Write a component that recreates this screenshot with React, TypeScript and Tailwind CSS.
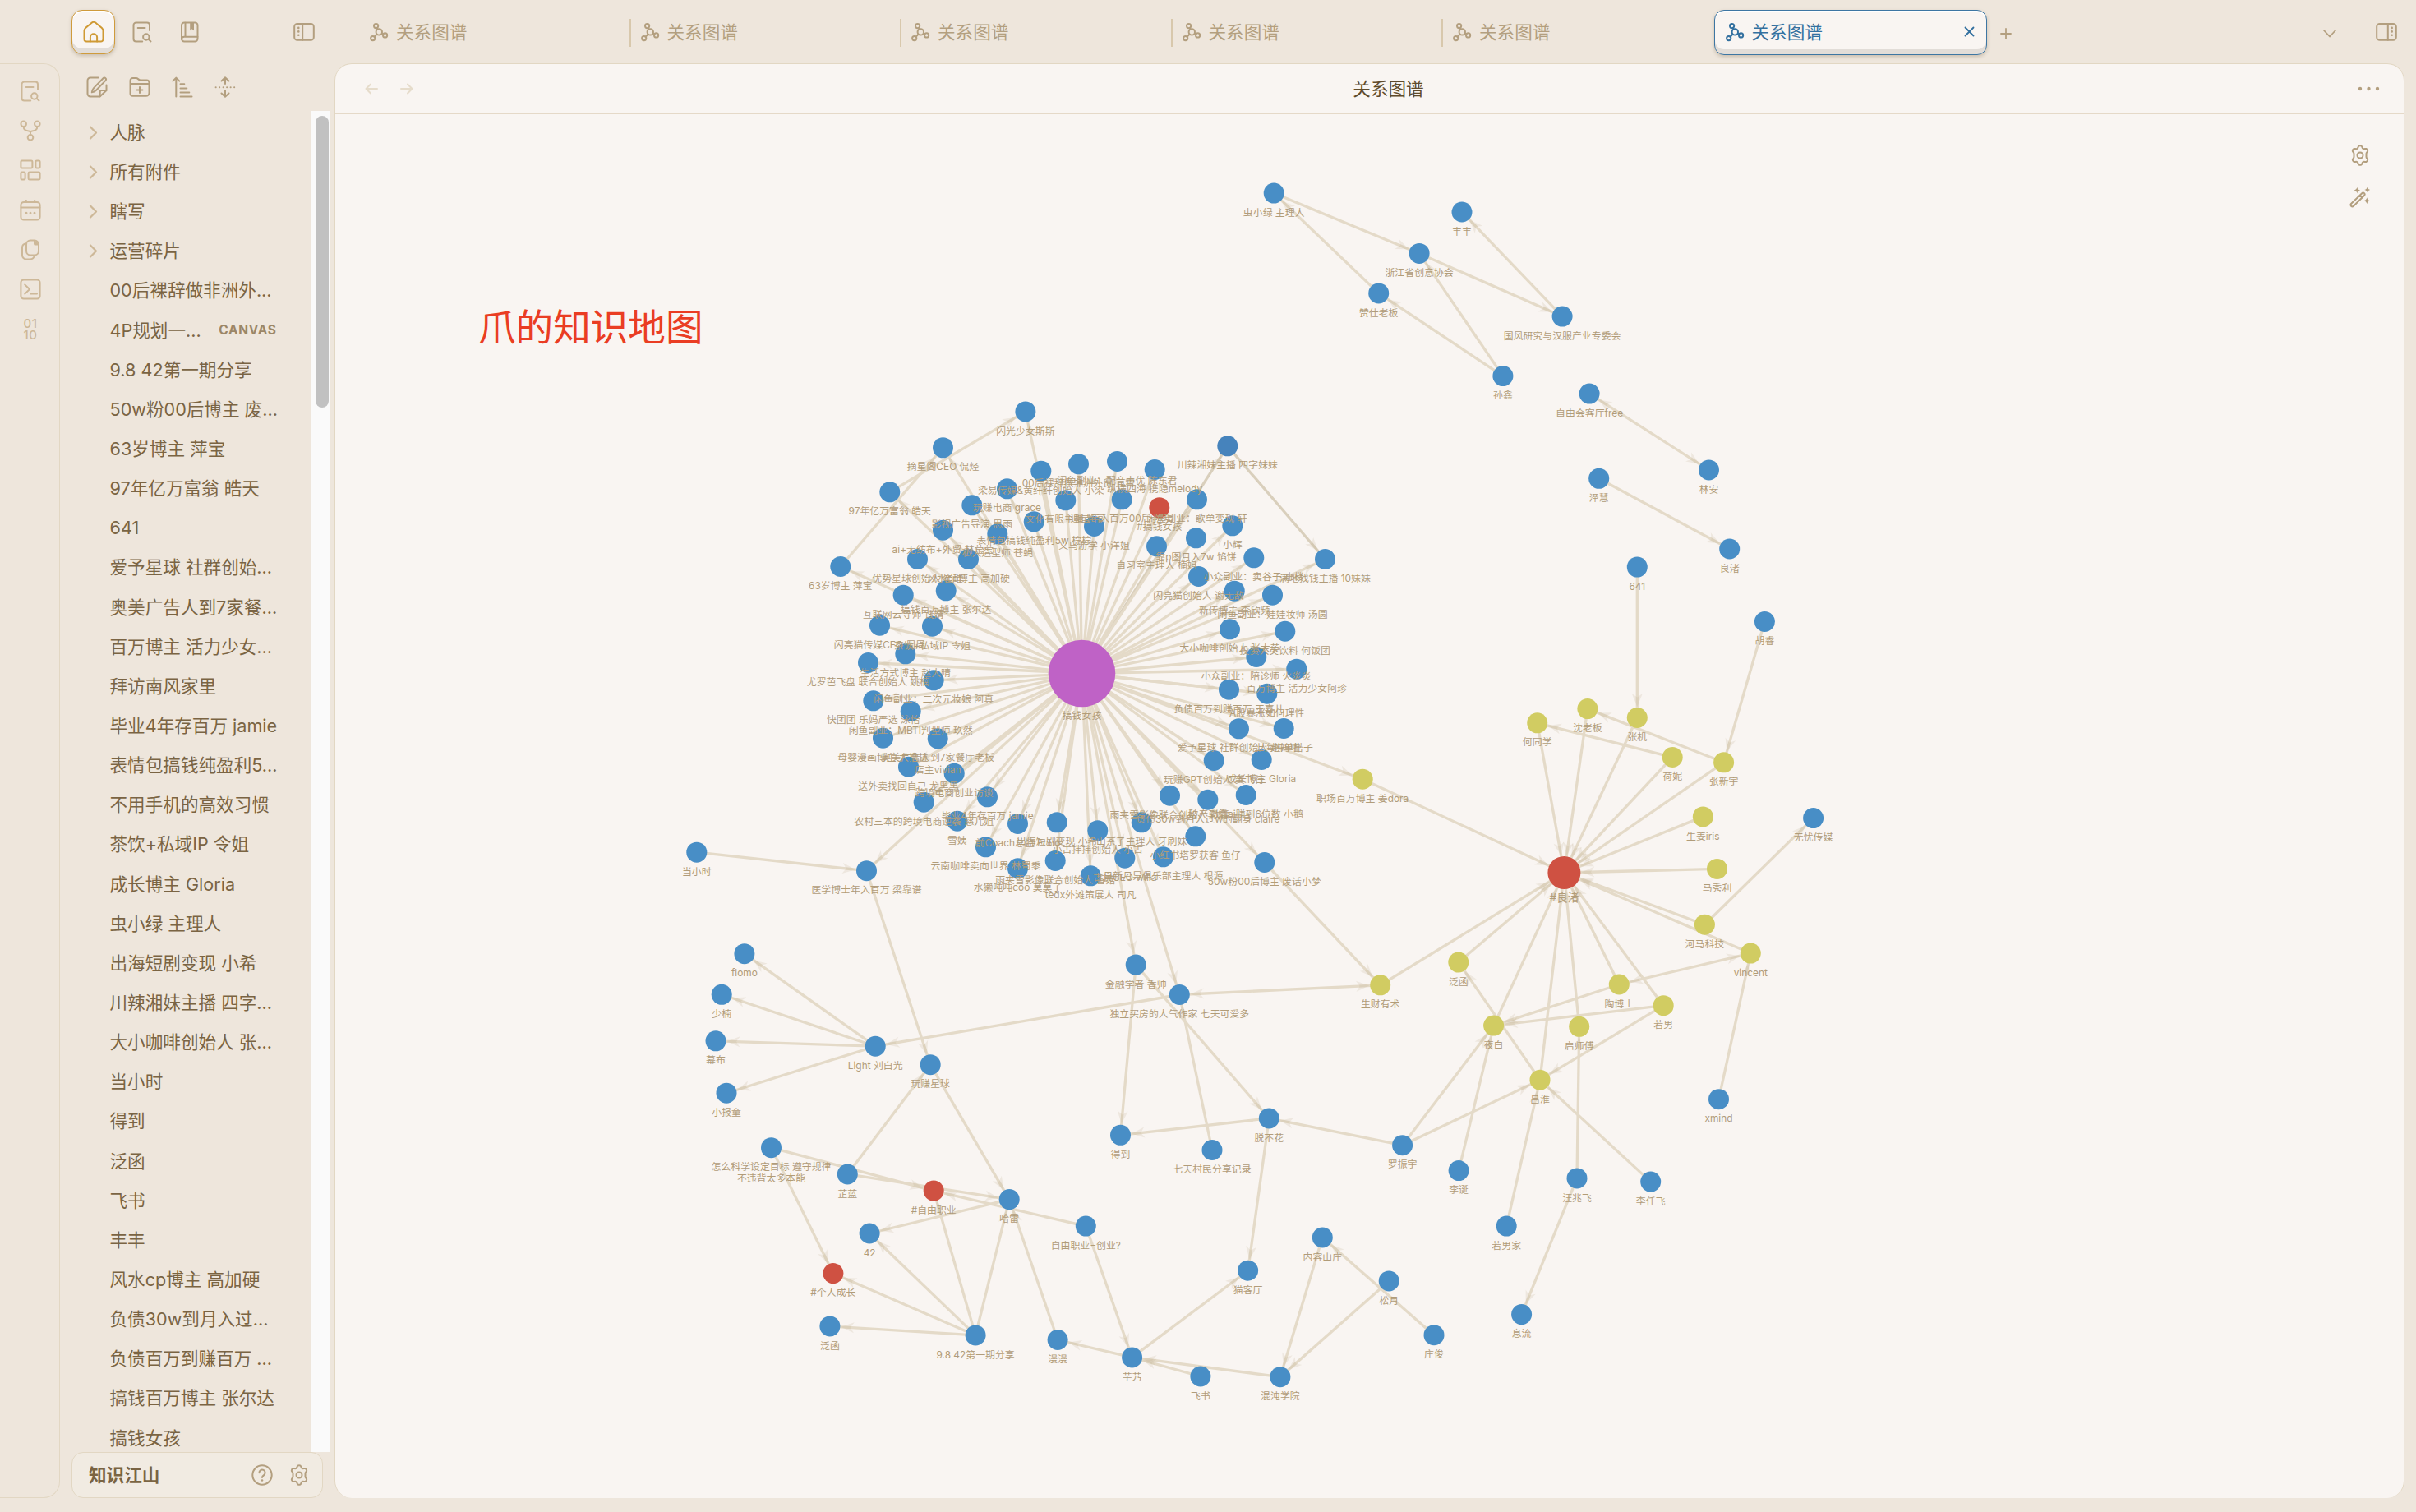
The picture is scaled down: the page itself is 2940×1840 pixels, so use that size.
import type { ReactNode } from 'react'

type Point = [label: string, x: number, y: number]

const files: { name: string; folder?: boolean; tag?: string }[] = [
  { name: '人脉', folder: true },
  { name: '所有附件', folder: true },
  { name: '瞎写', folder: true },
  { name: '运营碎片', folder: true },
  { name: '00后裸辞做非洲外...' },
  { name: '4P规划一...', tag: 'CANVAS' },
  { name: '9.8 42第一期分享' },
  { name: '50w粉00后博主 废...' },
  { name: '63岁博主 萍宝' },
  { name: '97年亿万富翁 皓天' },
  { name: '641' },
  { name: '爱予星球 社群创始...' },
  { name: '奥美广告人到7家餐...' },
  { name: '百万博主 活力少女...' },
  { name: '拜访南风家里' },
  { name: '毕业4年存百万 jamie' },
  { name: '表情包搞钱纯盈利5...' },
  { name: '不用手机的高效习惯' },
  { name: '茶饮+私域IP 令姐' },
  { name: '成长博主 Gloria' },
  { name: '虫小绿 主理人' },
  { name: '出海短剧变现 小希' },
  { name: '川辣湘妹主播 四字...' },
  { name: '大小咖啡创始人 张...' },
  { name: '当小时' },
  { name: '得到' },
  { name: '泛函' },
  { name: '飞书' },
  { name: '丰丰' },
  { name: '风水cp博主 高加硬' },
  { name: '负债30w到月入过...' },
  { name: '负债百万到赚百万 ...' },
  { name: '搞钱百万博主 张尔达' },
  { name: '搞钱女孩' },
]

const HUB: Point = ['搞钱女孩', 1316, 819]
const TAG: Point = ['#良渚', 1902.9, 1061.5]

// everything here is linked from the hub
const ring: Point[] = [
  ['闪光少女斯斯', 1247.4, 500.4],
  ['摘星阁CEO 侃烃', 1147, 544.3],
  ['97年亿万富翁 皓天', 1082.3, 598.3],
  ['63岁博主 萍宝', 1022.3, 689],
  ['玩赚电商 grace', 1225, 594.3],
  ['影视广告导演 思雨', 1182.3, 614.3],
  ['染易传媒&黄纤纤创始人 小染', 1266.3, 572.7],
  ['00后裸辞做非洲外贸 元霄', 1312, 564.3],
  ['闲鱼副业：配音声优 陈东君', 1359, 561],
  ['纵横四海 携隐melody', 1404.7, 571],
  ['文化有限主播 超哥', 1296.3, 608.3],
  ['追星年入百万00后 陈玥', 1364.7, 607.3],
  ['表情包搞钱纯盈利5w 柠柠', 1257.7, 634.3],
  ['义乌游学 小洋姐', 1331, 640],
  ['私人造型师 苍蝇', 1213.3, 649.3],
  ['ai+无纺布+外贸 林莹莹', 1147, 644.7],
  ['优势星球创始人 崔璀', 1116, 680],
  ['风水cp博主 高加硬', 1178, 680],
  ['搞钱百万博主 张尔达', 1150.7, 718.3],
  ['互联网云导师 钱婧', 1098.7, 723.7],
  ['闪亮猫传媒CEO 周周', 1070, 760.7],
  ['茶饮+私域IP 令姐', 1134, 761.7],
  ['生活方式博主 赵大晴', 1101.3, 795.3],
  ['尤罗芭飞盘 联合创始人 姚楠', 1056, 806],
  ['闲鱼副业：二次元妆娘 阿真', 1135.7, 827.3],
  ['快团团 乐妈严选 泳怡', 1062.3, 852.3],
  ['闲鱼副业：MBTI判型师 玖然', 1107.7, 865],
  ['母婴漫画博主 大撸拉', 1074, 897.7],
  ['奥美广告人到7家餐厅老板\n店主vivian', 1140.7, 898.3],
  ['送外卖找回自己 龙黑黑', 1105, 932.7],
  ['跨境电商创业访谈', 1160.7, 940.7],
  ['毕业4年存百万 jamie', 1201, 969.3],
  ['农村三本的跨境电商逆袭 慈儿姐', 1123.7, 975.7],
  ['雪姨', 1164.3, 998.7],
  ['前Coach总监 Echo', 1238, 1002],
  ['出海短剧变现 小希', 1285.7, 1000.3],
  ['小古拌拌创始人 小古', 1335.3, 1010.3],
  ['云南咖啡卖向世界 林蜀黍', 1199, 1030.3],
  ['水獭吨吨coo 莫莫子', 1238, 1056.3],
  ['雨夹雪影像联合创始人 香菇', 1283.7, 1047],
  ['tedx外滩策展人 司凡', 1326.7, 1065.3],
  ['山茶子主理人 牙刷妹', 1388.7, 1000.3],
  ['古良CEO willa', 1368.3, 1043.7],
  ['日新月异俱乐部主理人 根源', 1415, 1042.3],
  ['小红书塔罗获客 鱼仔', 1454.3, 1017.3],
  ['雨夹雪影像联合创始人 歆霖', 1423, 967.7],
  ['负债30w到月入过w的翻身 claire', 1469.3, 972.7],
  ['破产到靠ai赚到6位数 小鹅', 1515.7, 967],
  ['玩赚GPT创始人 龚飞行', 1476.7, 925],
  ['成长博主 Gloria', 1534.7, 924],
  ['爱予星球 社群创始人 赵丹喵', 1507, 886.3],
  ['上海拼单搭子', 1561.7, 886],
  ['负债百万到赚百万 王喜儿', 1495, 838.7],
  ['A股暴涨如何理性', 1541.3, 843.7],
  ['小众副业：陪诊师 火炎炎', 1528.3, 799],
  ['百万博主 活力少女阿珍', 1577.3, 813.7],
  ['50w粉00后博主 废话小梦', 1538.3, 1049],
  ['川辣湘妹主播 四字妹妹', 1493.3, 542.3],
  ['#搞钱女孩', 1410.3, 617.3],
  ['闲鱼副业：歌单变现 轩', 1456, 607.3],
  ['小辉', 1499.3, 639.3],
  ['靠p图月入7w 馅饼', 1455, 654.3],
  ['自习室主理人 楠姐', 1407, 664.3],
  ['小众副业：卖谷子 小楼', 1525.3, 678.3],
  ['满地找钱主播 10妹妹', 1612, 680],
  ['闪亮猫创始人 谢无敌', 1458, 701],
  ['新传博主 李欣频', 1501.7, 718.7],
  ['闲鱼副业：娃娃妆师 汤圆', 1548, 723.7],
  ['大小咖啡创始人 张大英', 1496, 765.3],
  ['投资大英饮料 何饭团', 1563.3, 767.7],
  ['医学博士年入百万 梁靠谱', 1054, 1059.2],
  ['金融学者 香帅', 1381.7, 1173.6],
  ['独立买房的人气作家 七天可爱多', 1434.8, 1210],
]

// notes tagged #良渚
const tagged: Point[] = [
  ['职场百万博主 姜dora', 1657.7, 947.7],
  ['何同学', 1870.2, 879.3],
  ['沈老板', 1931.4, 862.1],
  ['张机', 1991.8, 873],
  ['荷妮', 2034.7, 921],
  ['张新宇', 2097.1, 927.3],
  ['生姜iris', 2071.8, 993.4],
  ['马秀利', 2089, 1056.9],
  ['河马科技', 2073.9, 1124.7],
  ['vincent', 2129.8, 1159.6],
  ['泛函', 1774.3, 1170.6],
  ['生财有术', 1679.2, 1198.3],
  ['陶博士', 1969.8, 1197.5],
  ['若男', 2023.7, 1223.2],
  ['夜白', 1817.1, 1247.6],
  ['启师傅', 1921.2, 1248.8],
  ['吕淮', 1873.5, 1313.7],
]

const others: Point[] = [
  ['虫小绿 主理人', 1549.7, 234.6],
  ['丰丰', 1778.5, 257.5],
  ['浙江省创意协会', 1726.6, 307.9],
  ['赞仕老板', 1677.2, 356.4],
  ['国风研究与汉服产业专委会', 1900.6, 384.6],
  ['孙鑫', 1828.4, 457.1],
  ['自由会客厅free', 1933.6, 478.6],
  ['林安', 2079, 571.4],
  ['泽慧', 1945.2, 581.8],
  ['良渚', 2104.2, 667.5],
  ['641', 1991.8, 689.6],
  ['胡睿', 2146.9, 756],
  ['无忧传媒', 2206.1, 995.1],
  ['xmind', 2091, 1337.2],
  ['罗振宇', 1706.1, 1393.2],
  ['脱不花', 1543.8, 1360.4],
  ['得到', 1363, 1380.8],
  ['七天村民分享记录', 1474.5, 1399],
  ['李诞', 1774.6, 1424.1],
  ['汪兆飞', 1918.5, 1433.4],
  ['李任飞', 2008.2, 1437.6],
  ['若男家', 1832.7, 1491.6],
  ['内容山庄', 1608.8, 1505.4],
  ['猫客厅', 1518.1, 1545.7],
  ['松月', 1689.7, 1558.4],
  ['息流', 1851.1, 1599.1],
  ['庄俊', 1744.5, 1624.2],
  ['芋艿', 1377.1, 1651.4],
  ['飞书', 1460.4, 1674.5],
  ['混沌学院', 1557.4, 1675.2],
  ['自由职业=创业?', 1320.8, 1491.6],
  ['当小时', 847.3, 1036.7],
  ['flomo', 905.4, 1160.2],
  ['少楠', 877.7, 1209.8],
  ['幕布', 870.5, 1266.3],
  ['小报童', 883.5, 1329.7],
  ['Light 刘白光', 1064.7, 1272.7],
  ['玩赚星球', 1131.7, 1295.2],
  ['怎么科学设定目标 遵守规律\n不违背太多本能', 938, 1396.2],
  ['芷蓝', 1030.8, 1428.4],
  ['#自由职业', 1135.7, 1448.6],
  ['哈雷', 1227.7, 1459.1],
  ['42', 1057.6, 1500.5],
  ['#个人成长', 1013.4, 1549.1],
  ['泛函 ', 1009.4, 1613.4],
  ['9.8 42第一期分享', 1186.6, 1624.4],
  ['漫漫', 1286.6, 1630],
]

// looked up by the start of the label
const links: [from: string, to: string, both?: boolean][] = [
  ['97年', '闪光少女'],
  ['63岁', '摘星阁'],
  ['川辣', '满地'],
  ['50w', '生财有术'],
  ['当小时', '医学博士'],
  ['医学博士', '玩赚星球'],
  ['独立', '生财有术', true],
  ['独立', 'Light'],
  ['Light', 'flomo'],
  ['Light', '少楠'],
  ['Light', '幕布'],
  ['Light', '小报童'],
  ['芷蓝', '玩赚星球'],
  ['玩赚星球', '哈雷'],
  ['怎么', '#自由'],
  ['怎么', '#个人'],
  ['芷蓝', '哈雷'],
  ['自由职业', '#自由'],
  ['哈雷', '42'],
  ['9.8', '42'],
  ['9.8', '#个人'],
  ['9.8', '泛函 '],
  ['9.8', '哈雷'],
  ['9.8', '#自由'],
  ['漫漫', '哈雷'],
  ['自由职业', '芋艿'],
  ['芋艿', '漫漫'],
  ['飞书', '芋艿'],
  ['混沌', '芋艿'],
  ['芋艿', '猫客厅'],
  ['金融', '得到'],
  ['金融', '脱不花'],
  ['脱不花', '得到'],
  ['脱不花', '猫客厅'],
  ['罗振宇', '脱不花'],
  ['七天村民', '独立'],
  ['罗振宇', '夜白'],
  ['罗振宇', '吕淮'],
  ['若男', '夜白'],
  ['若男', '吕淮'],
  ['陶博士', '夜白'],
  ['陶博士', 'vincent', true],
  ['吕淮', '泛函'],
  ['李诞', '夜白'],
  ['若男家', '吕淮'],
  ['李任飞', '吕淮'],
  ['汪兆飞', '启师傅'],
  ['汪兆飞', '息流'],
  ['内容', '混沌'],
  ['松月', '混沌'],
  ['庄俊', '内容'],
  ['xmind', 'vincent'],
  ['河马', '无忧'],
  ['胡睿', '张新宇'],
  ['641', '张机'],
  ['张新宇', '沈老板'],
  ['荷妮', '何同学'],
  ['虫小绿', '浙江'],
  ['赞仕', '虫小绿'],
  ['孙鑫', '赞仕'],
  ['孙鑫', '浙江'],
  ['浙江', '国风'],
  ['国风', '丰丰'],
  ['自由会客厅', '林安', true],
  ['泽慧', '良渚'],
]

const all = [HUB, TAG, ...ring, ...tagged, ...others]
const find = (key: string) => all.find((p) => p[0] === key) ?? all.find((p) => p[0].startsWith(key))!

const edges: [Point, Point, boolean?][] = [
  ...ring.map((p): [Point, Point] => [HUB, p]),
  [HUB, tagged[0]],
  ...tagged.map((p): [Point, Point] => [p, TAG]),
  ...links.map(([a, b, both]): [Point, Point, boolean?] => [find(a), find(b), both]),
]

const radius = (p: Point) => (p === HUB ? 40.8 : p === TAG ? 20 : 12.5)

function fill(p: Point) {
  if (p === HUB) return '#bf62c6'
  if (p[0].startsWith('#')) return '#cf5142'
  if (tagged.includes(p)) return '#d1cc62'
  if (p[0].startsWith('川辣')) return '#4683bc'
  return '#488ec6'
}

function Arrow({ from, to }: { from: Point; to: Point }) {
  const angle = (Math.atan2(to[2] - from[2], to[1] - from[1]) * 180) / Math.PI
  return (
    <path
      d="M0 0L-16 -6.5L-11.5 0L-16 6.5Z"
      fill="#b9a585"
      fillOpacity={0.17}
      transform={`translate(${to[1]} ${to[2]}) rotate(${angle}) translate(${-radius(to) - 1} 0)`}
    />
  )
}

function Graph() {
  return (
    <svg className="block w-full h-full" style={{ fontFamily: 'Inter, "Noto Sans CJK SC", sans-serif' }}>
      <g transform="translate(-407.5 -138.5)">
        {edges.map(([a, b], i) => (
          <line
            key={i}
            x1={a[1]}
            y1={a[2]}
            x2={b[1]}
            y2={b[2]}
            stroke={a[0].startsWith('川辣') || b[0].startsWith('川辣') ? '#d9cfbc' : '#e4dac8'}
            strokeWidth={3.3}
          />
        ))}
        {edges.map(([a, b, both], i) => (
          <g key={i}>
            <Arrow from={a} to={b} />
            {both && <Arrow from={b} to={a} />}
          </g>
        ))}
        {all.map((p, i) => (
          <circle key={i} cx={p[1]} cy={p[2]} r={radius(p)} fill={fill(p)} />
        ))}
        <g fill="#b19c79" textAnchor="middle" fontSize={11.9}>
          {all.map((p, i) =>
            p[0].trim().split('\n').map((line, n) => (
              <text
                key={`${i}-${n}`}
                x={p[1]}
                y={p[2] + radius(p) + 15.1 + n * 14.1}
                fontSize={p === TAG ? 13.5 : undefined}
              >
                {line}
              </text>
            )),
          )}
        </g>
      </g>
    </svg>
  )
}

function Icon({ children, w = 26, h = 26, sw = 2 }: { children: ReactNode; w?: number; h?: number; sw?: number }) {
  return (
    <svg
      width={w}
      height={h}
      viewBox={`0 0 ${w} ${h}`}
      fill="none"
      stroke="currentColor"
      strokeWidth={sw}
      strokeLinecap="round"
      strokeLinejoin="round"
      className="shrink-0"
    >
      {children}
    </svg>
  )
}

const HomeIcon = () => (
  <Icon>
    <path d="M1.5 11.6c0-1.4.6-2.6 1.6-3.5l7.2-6.2c1.6-1.3 3.8-1.3 5.4 0l7.2 6.2c1 .9 1.6 2.1 1.6 3.5v10.1a2.8 2.8 0 0 1-2.8 2.8H4.3a2.8 2.8 0 0 1-2.8-2.8z" />
    <path d="M8.9 24.5v-5.2a4.1 4.1 0 0 1 8.2 0v5.2" />
  </Icon>
)

const FileSearchIcon = () => (
  <Icon>
    <path d="M22 11V4.6a3.1 3.1 0 0 0-3.1-3.1H5.6a3.1 3.1 0 0 0-3.1 3.1v16.8a3.1 3.1 0 0 0 3.1 3.1h7.6M7.7 8h8.8" />
    <circle cx="17.8" cy="19" r="3.7" />
    <path d="m20.6 21.8 2.9 2.6" />
  </Icon>
)

const BookIcon = () => (
  <Icon>
    <rect x="3" y="1.5" width="19.5" height="23" rx="3.2" />
    <path d="M7.5 1.8v16.9M3 21.8a3.2 3.2 0 0 1 3.2-3.1h16.2" />
    <path d="M13.2 2v9.3l2.4-2 2.4 2V2z" fill="currentColor" stroke="none" />
  </Icon>
)

const SidebarIcon = ({ flip }: { flip?: boolean }) => (
  <Icon>
    <g transform={flip ? 'translate(26 0) scale(-1 1)' : undefined}>
      <rect x="1.2" y="3" width="23.6" height="19.8" rx="3.6" />
      <path d="M11.2 3v19.8" />
      <path d="M6.3 7.9v.1M6.3 12.3v.1M6.3 16.7v.1" strokeWidth="2.6" />
    </g>
  </Icon>
)

const GraphIcon = () => (
  <Icon w={23} h={23}>
    <circle cx="7.6" cy="3.6" r="2.6" />
    <circle cx="11.3" cy="10.9" r="3.7" />
    <circle cx="3.7" cy="18.6" r="2.6" />
    <circle cx="18.6" cy="14.9" r="2.6" />
    <path d="m8.7 6 1 1.8M8.6 13.5l-3 3.2M14.9 12.5l1.5.9" />
  </Icon>
)

const ForkIcon = () => (
  <Icon>
    <circle cx="4.7" cy="4.7" r="3.3" />
    <circle cx="21.3" cy="4.7" r="3.3" />
    <circle cx="13" cy="21.3" r="3.3" />
    <path d="M4.7 8.2c0 4.4 4 5 6.2 5.2 1.3.1 2.1.9 2.1 2.2V18M21.3 8.2c0 4.4-4 5-6.2 5.2-1.3.1-2.1.9-2.1 2.2" />
  </Icon>
)

const BoardIcon = () => (
  <Icon>
    <rect x="1.4" y="1.4" width="14" height="9.2" rx="1.4" />
    <rect x="19.4" y="1.4" width="5.2" height="9.2" rx="1.4" />
    <rect x="1.4" y="15.4" width="5.2" height="9.2" rx="1.4" />
    <rect x="10.6" y="15.4" width="14" height="9.2" rx="1.4" />
  </Icon>
)

const CalendarIcon = () => (
  <Icon>
    <rect x="1.4" y="3" width="23.2" height="21.6" rx="3.6" />
    <path d="M1.6 9.4h22.8M7.8.8v2M18.2.8v2" />
    <path d="M8 16.2v.1M13 16.2v.1M18 16.2v.1" strokeWidth="3" />
  </Icon>
)

const CopyIcon = () => (
  <Icon>
    <path d="M7.6 5.4C4.7 5.6 3 7.4 3 10.4v9a5 5 0 0 0 5 5h4.6c3 0 4.8-1.5 5.2-4.2" />
    <rect x="8" y="1.4" width="15" height="18" rx="5" />
    <path d="M17 1.8v3.6a2.2 2.2 0 0 0 2.2 2.2H23c-.2-3.6-2.2-5.6-6-5.8z" fill="currentColor" stroke="none" />
  </Icon>
)

const TerminalIcon = () => (
  <Icon>
    <rect x="1.4" y="1.4" width="23.2" height="23.2" rx="3.4" />
    <path d="m6.2 7.4 5.8 5.6-5.8 5.6M13 18.6h8" />
  </Icon>
)

const EditIcon = () => (
  <Icon>
    <path d="M14.5 1.5H5A3.5 3.5 0 0 0 1.5 5v16A3.5 3.5 0 0 0 5 24.5h11.5l8-7.5v-6.5" />
    <path d="M16.7 24.3v-5.4a1.8 1.8 0 0 1 1.8-1.8h5.8" />
    <path d="M6.8 19.3c.2-2 .8-3.700 2.200-5.200L20.500 2.300c.9-.9 2.100-.9 2.900-.1.9.9.8 2-.1 2.900L11.800 17c-1.400 1.400-3 2.100-5 2.300z" />
  </Icon>
)

const FolderPlusIcon = () => (
  <Icon>
    <path d="M1.500 21V5a3 3 0 0 1 3-3h4.300c2 0 2.600 2.400 5 2.400h7.700a3 3 0 0 1 3 3V20a3.800 3.800 0 0 1-3.800 3.800H4.500A3 3 0 0 1 1.500 21zM1.600 9h22.800M13 13v7M9.500 16.500h7" />
  </Icon>
)

const SortIcon = () => (
  <Icon>
    <path d="M5.3 24.5V1.8M1.3 5.6l4-4 4 4M10.5 9.3h4.8M10.5 14.4h7.8M10.5 19.4h10.8M10.5 24.5h14" />
  </Icon>
)

const ExpandIcon = () => (
  <Icon>
    <path d="M13 9V1.500M8.500 5.500 13 1.300l4.500 4.200M13 17v7.500M8.500 20.500l4.500 4.200 4.500-4.200" />
    <path d="M1.600 13.200h23" strokeDasharray=".1 4.400" strokeWidth="2" />
  </Icon>
)

const GearIcon = () => (
  <Icon>
    <path d="M11.4 1.7c.8-.5 2.4-.5 3.2 0 1 .7.7 2.5 2 3.2 1.4.8 2.8-.4 3.9.1.9.4 1.7 1.7 1.7 2.7 0 1.2-1.7 1.9-1.7 3.3v4c0 1.4 1.7 2.1 1.7 3.3 0 1-.8 2.3-1.7 2.700-1.100.5-2.500-.7-3.900.1-1.300.7-1 2.500-2 3.200-.8.5-2.400.5-3.200 0-1-.7-.7-2.500-2-3.200-1.400-.8-2.800.4-3.900-.1-.9-.4-1.700-1.700-1.700-2.700 0-1.200 1.700-1.900 1.700-3.300v-4C5.500 9.600 3.800 8.900 3.800 7.700c0-1 .8-2.300 1.700-2.700 1.100-.5 2.500.7 3.900-.1 1.300-.7 1-2.500 2-3.200z" />
    <circle cx="13" cy="13" r="3.5" />
  </Icon>
)

const HelpIcon = () => (
  <Icon>
    <circle cx="13" cy="13" r="11.7" />
    <path d="M9.4 10.2a3.6 3.6 0 1 1 5.7 2.9c-1.3.9-2.1 1.5-2.1 3" />
    <path d="M13 19.4v.1" strokeWidth="2.5" />
  </Icon>
)

const WandIcon = () => (
  <Icon>
    <path d="m2.2 20.8 13-12.6c.9-.9 2-.9 2.800-.1.8.9.8 2-.1 2.900L5 23.700c-.9.9-2.100.9-2.900.1-.8-.9-.8-2.100.1-3zM12.800 10.700l2.900 2.900" />
    <g fill="currentColor" stroke="none">
      <path d="M9.300.8c.5 2.200 1.500 3.200 3.900 3.800-2.400.6-3.400 1.600-3.900 3.800-.5-2.200-1.500-3.200-3.900-3.800 2.400-.6 3.400-1.600 3.900-3.800z" />
      <path d="M21.800.5c.5 2 1.300 2.900 3.500 3.400-2.200.5-3 1.400-3.500 3.400-.5-2-1.300-2.900-3.500-3.400 2.200-.5 3-1.400 3.500-3.400z" />
      <path d="M21.300 13.300c.5 2.400 1.600 3.400 4.100 4-2.500.6-3.600 1.600-4.100 4-.5-2.400-1.600-3.400-4.100-4 2.500-.6 3.600-1.600 4.100-4z" />
    </g>
  </Icon>
)

function TopBar() {
  return (
    <header className="flex h-[77px] shrink-0 text-[#b39f7f]">
      <div className="flex w-[438px] shrink-0 pl-[87px]">
        <div className="mt-3 flex h-[54px] w-[53px] items-start justify-center rounded-[13px] border border-[#cf9b3c] bg-[#f9f5f2] pt-[13px] text-[#cf9a35] shadow-[inset_0_-6px_0_#e2ddd8,inset_0_2px_0_#ffffff,0_2px_4px_rgba(90,70,40,0.25)]">
          <HomeIcon />
        </div>
        <div className="ml-5 mt-[26px]">
          <FileSearchIcon />
        </div>
        <div className="ml-8 mt-[26px]">
          <BookIcon />
        </div>
        <div className="ml-[113px] mt-[26px]">
          <SidebarIcon />
        </div>
      </div>
      <div className="flex">
        {[0, 1, 2, 3, 4].map((i) => (
          <div key={i} className="flex h-[77px] w-[329.5px] items-center pl-3 pt-[2px]">
            <GraphIcon />
            <span className="ml-[9px] text-[21.6px] leading-none">关系图谱</span>
            <span className={i < 4 ? 'ml-auto h-[34px] w-[2px] bg-[#d8c8ac]' : 'hidden'} />
          </div>
        ))}
        <div className="mt-3 flex h-[55px] w-[332.5px] items-center rounded-[12px] border border-[#3d76a3] bg-[#f9f5f2] pl-[13px] pr-[14px] text-[#33709f] shadow-[inset_0_-6px_0_#e2ddd8,inset_0_2px_0_#ffffff,0_2px_4px_rgba(90,70,40,0.25)]">
          <GraphIcon />
          <span className="ml-[9px] text-[21.6px] leading-none">关系图谱</span>
          <span className="ml-auto pb-[2px]">
            <Icon w={13} h={13} sw={1.8}>
              <path d="m1.5 1.5 10 10M11.5 1.5l-10 10" />
            </Icon>
          </span>
        </div>
      </div>
      <div className="ml-4 mt-[34px]">
        <Icon w={14} h={14} sw={1.8}>
          <path d="M7 1v12M1 7h12" />
        </Icon>
      </div>
      <div className="ml-auto mt-[36px]">
        <Icon w={16} h={10} sw={1.8}>
          <path d="m1 1 7 7.5L15 1" />
        </Icon>
      </div>
      <div className="ml-[48px] mr-[23px] mt-[26px]">
        <SidebarIcon flip />
      </div>
    </header>
  )
}

function Ribbon() {
  return (
    <nav className="flex w-[73px] shrink-0 flex-col items-center gap-[22.2px] rounded-r-[20px] border border-l-0 border-[#e2d7c3] pl-[2px] pt-5 text-[#cdb898]">
      <FileSearchIcon />
      <ForkIcon />
      <BoardIcon />
      <CalendarIcon />
      <CopyIcon />
      <TerminalIcon />
      <div className="text-center text-[15px] font-medium leading-[13.5px] tracking-[0.5px]">
        01
        <br />
        10
      </div>
    </nav>
  )
}

function Sidebar() {
  return (
    <aside className="flex w-[334px] shrink-0 flex-col">
      <div className="flex h-[58px] shrink-0 gap-[26px] pl-8 pt-4 text-[#b39f7f]">
        <EditIcon />
        <FolderPlusIcon />
        <SortIcon />
        <ExpandIcon />
      </div>
      <div className="flex h-[1632px] shrink-0 overflow-hidden">
        <div className="w-[304.7px] shrink-0 pt-[2px]">
          {files.map((file) => (
            <div key={file.name} className="flex h-[48.15px] items-center pl-[35px] text-[21.6px] text-[#7a6443]">
              <span className="flex w-[25.5px] shrink-0 text-[#cdb898]">
                {file.folder && (
                  <Icon w={11} h={17} sw={2.2}>
                    <path d="m2 1.5 7 7-7 7" />
                  </Icon>
                )}
              </span>
              <span className="whitespace-nowrap">{file.name}</span>
              {file.tag && (
                <span className="ml-auto mr-[41px] text-[15.5px] font-bold tracking-[0.7px] text-[#9b8667]">{file.tag}</span>
              )}
            </div>
          ))}
        </div>
        <div className="w-[23.3px] bg-[#fafafa] pl-[6.5px] pt-[6px]">
          <div className="h-[355px] w-4 rounded-full bg-[#c1c1c1]" />
        </div>
      </div>
      <div className="ml-[14px] flex h-[56px] w-[306px] items-center rounded-[14px] border border-[#e2d7c3] bg-[#f1ebe2] pl-5 pr-[15px] text-[#b39f7f]">
        <span className="text-[21.6px] font-bold text-[#7a6443]">知识江山</span>
        <span className="ml-auto mr-[19px]">
          <HelpIcon />
        </span>
        <GearIcon />
      </div>
    </aside>
  )
}

export default function App() {
  return (
    <div className="flex h-[1840px] w-[2940px] flex-col overflow-hidden bg-[#eee6dc] font-[Inter,'Noto_Sans_CJK_SC',sans-serif]">
      <TopBar />
      <div className="flex h-[1746px] shrink-0">
        <Ribbon />
        <Sidebar />
        <main className="mr-[14px] flex min-w-0 flex-1 flex-col overflow-hidden rounded-[21px] border border-b-0 border-[#e2d7c3] bg-[#f9f5f2]">
          <div className="flex h-[61px] shrink-0 items-center border-b border-[#e5d9c8] px-9 text-[#e6dccb]">
            <Icon w={16} h={14} sw={2}>
              <path d="M15 7H1.5M7 1.5 1.5 7 7 12.5" />
            </Icon>
            <span className="ml-[27px]">
              <Icon w={16} h={14} sw={2}>
                <path d="M1 7h13.5M9 1.5 14.5 7 9 12.5" />
              </Icon>
            </span>
            <span className="flex-1 pl-[7px] text-center text-[21.6px] text-[#5f4b2b]">关系图谱</span>
            <span className="mr-[-7px] text-[#b39f7f]">
              <Icon w={27} h={8} sw={4.4}>
                <path d="M3 4h.01M13.5 4h.01M24 4h.01" />
              </Icon>
            </span>
          </div>
          <div className="relative flex-1 overflow-hidden">
            <Graph />
            <div className="absolute left-[174px] top-[227px] whitespace-nowrap text-[45.6px] leading-[66px] text-[#ea3d23]">
              爪的知识地图
            </div>
            <div className="absolute right-[40px] top-[37px] flex flex-col gap-[25px] text-[#b39f7f]">
              <GearIcon />
              <WandIcon />
            </div>
          </div>
        </main>
      </div>
    </div>
  )
}
